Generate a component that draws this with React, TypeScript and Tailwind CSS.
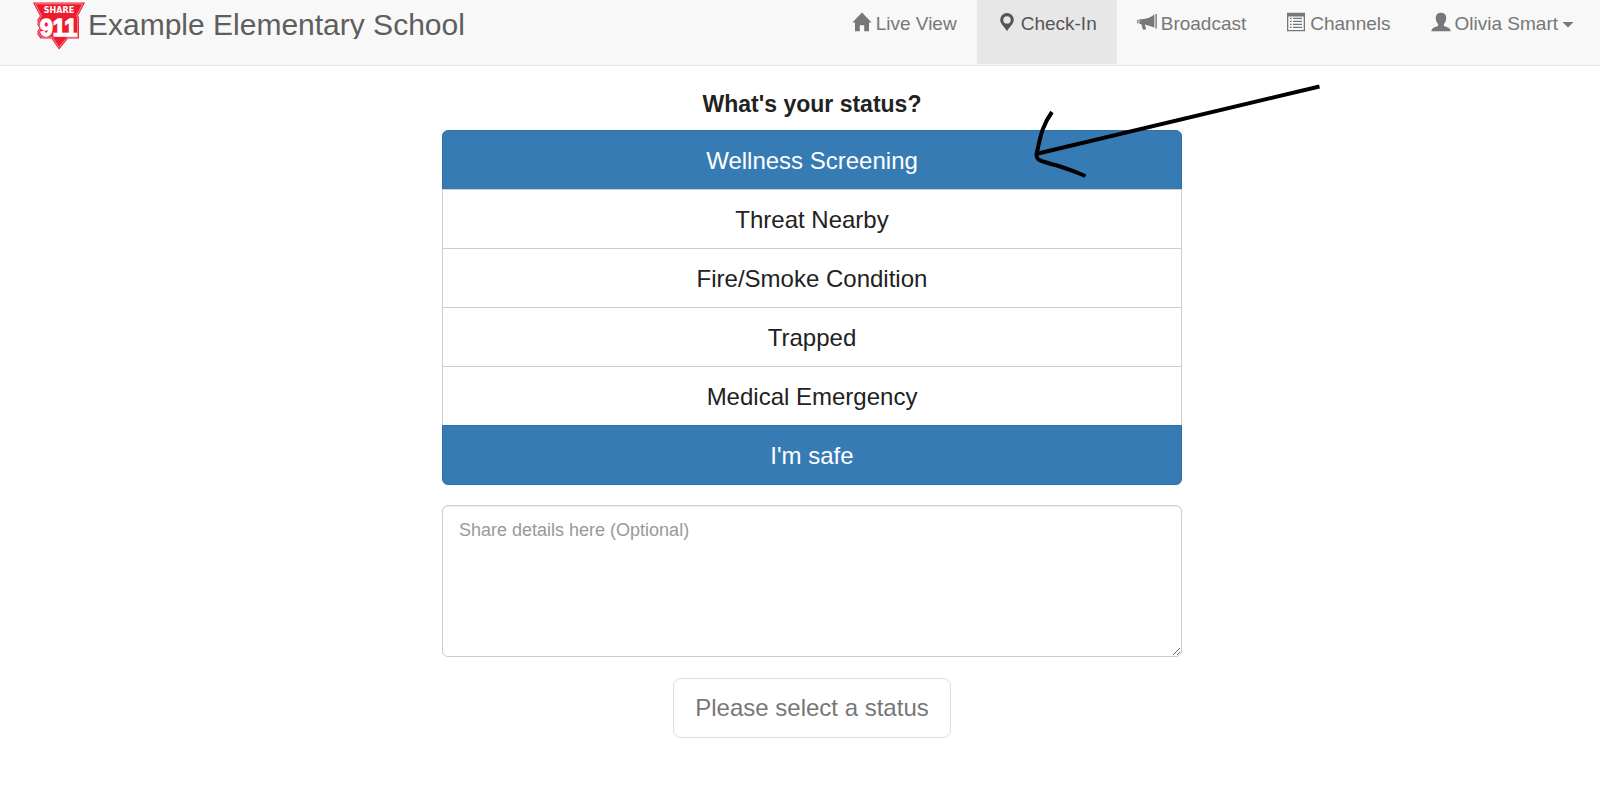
import { ReactNode, useState } from 'react';

interface NavItemProps {
  icon: ReactNode;
  label: string;
  active?: boolean;
  caret?: boolean;
}

const statuses = [
  { label: 'Wellness Screening', primary: true },
  { label: 'Threat Nearby', primary: false },
  { label: 'Fire/Smoke Condition', primary: false },
  { label: 'Trapped', primary: false },
  { label: 'Medical Emergency', primary: false },
  { label: "I'm safe", primary: true },
];

function Logo() {
  return (
    <svg viewBox="-1 0 53 48" className="h-12 w-[53px] shrink-0" aria-hidden="true">
      <path
        d="M0 .5H52L45 14L46 15V36.500H35L26 47.500L18.500 36.500H7.500L4.500 32.500V29L6.500 26L4.500 23V17.500L7 14Z"
        fill="#ed1c2e"
      />
      <path
        d="M2.300 1.800H49.700L43.600 14L44.700 15.500V35.200H34.300L26 45.300L19.200 35.200H8.200L5.900 32V29.500L8 26L5.900 22.500V18L8.500 14Z"
        fill="none"
        stroke="#fff"
        strokeOpacity="0.8"
        strokeWidth="0.6"
      />
      <text
        x="26"
        y="11"
        textAnchor="middle"
        fill="#fff"
        fontFamily="DejaVu Sans, sans-serif"
        fontWeight="700"
        fontSize="8"
      >
        SHARE
      </text>
      <text
        x="25.500"
        y="33.500"
        textAnchor="middle"
        fill="#fff"
        stroke="#fff"
        strokeWidth="1.400"
        fontFamily="Liberation Sans, Arial, sans-serif"
        fontWeight="700"
        fontSize="23"
      >
        911
      </text>
    </svg>
  );
}

function HomeIcon() {
  return (
    <svg viewBox="0 0 20 20" className="size-5" fill="currentColor" aria-hidden="true">
      <path d="M10 .6l9.600 9.800H17v8.900h-4.800v-6.100H7.800v6.100H3v-8.900H.4z" />
    </svg>
  );
}

function PinIcon() {
  return (
    <svg viewBox="0 0 20 20" className="size-5" fill="currentColor" aria-hidden="true">
      <path
        fillRule="evenodd"
        d="M10 1a6.800 6.800 0 0 1 6.800 6.800c0 4.200-4.600 7.600-6.800 11.400-2.200-3.800-6.800-7.200-6.800-11.400A6.800 6.800 0 0 1 10 1zm0 3.200a3.700 3.700 0 1 0 0 7.400 3.700 3.700 0 0 0 0-7.400z"
      />
    </svg>
  );
}

function BullhornIcon() {
  return (
    <svg viewBox="0 0 20 20" className="size-5" fill="currentColor" aria-hidden="true">
      <path d="M18.400 2h1.400v14.600h-1.400zM17.400 2.400v13.200l-9.600-3 1.400 4.600-3.200.5-1.800-5.600H3V7.300h1.600c5-.4 8.800-2 12.800-4.900zM.2 7.800h1.200v3.400H.2zM1.900 7.200h.7v4.700h-.7z" />
    </svg>
  );
}

function ListIcon() {
  return (
    <svg viewBox="0 0 20 20" className="size-5" fill="currentColor" aria-hidden="true">
      <path fillRule="evenodd" d="M1 .8h18v18.500H1zM2.300 4.500v13.400h15.400V4.500z" />
      <path d="M4 5.800h1.700v1.200H4zM7 5.800h9v1.200H7zM4 8.700h1.700v1.200H4zM7 8.700h9v1.200H7zM4 11.700h1.700v1.200H4zM7 11.700h9v1.200H7zM4 14.700h1.700v1.200H4zM7 14.700h9v1.200H7z" />
    </svg>
  );
}

function UserIcon() {
  return (
    <svg viewBox="0 0 20 20" className="size-5" fill="currentColor" aria-hidden="true">
      <path d="M10 .8c3.400 0 5.200 2.200 5.200 5.200 0 2.500-.9 4.700-2.300 6v1.400c0 .5.200.7.700.9 3.200 1.100 5.200 2 5.700 3.400.2.600.3 1.100.3 1.600H.4c0-.5.1-1 .3-1.600.5-1.400 2.500-2.300 5.700-3.400.5-.2.700-.4.700-.9V12c-1.400-1.300-2.300-3.500-2.300-6C4.800 3 6.600.8 10 .8z" />
    </svg>
  );
}

function NavItem({ icon, label, active = false, caret = false }: NavItemProps) {
  return (
    <li>
      <a
        href="#"
        aria-current={active ? 'page' : undefined}
        className={`flex h-16 items-start gap-1 px-5 pt-3 ${
          active ? 'bg-[#e7e7e7] text-[#555]' : 'text-[#777]'
        }`}
      >
        {icon}
        <span className="text-[19px] leading-6">{label}</span>
        {caret && (
          <svg viewBox="0 0 12 6" className="mt-2.5 h-1.5 w-3" fill="currentColor" aria-hidden="true">
            <path d="M.5 0h11L6 5.500z" />
          </svg>
        )}
      </a>
    </li>
  );
}

function Arrow() {
  return (
    <svg
      viewBox="0 0 300 110"
      className="pointer-events-none absolute -top-[52px] left-[582px] h-[110px] w-[300px]"
      fill="none"
      stroke="#000"
      strokeWidth="4"
      aria-hidden="true"
    >
      <path d="M295.500 8.500L14 75.500" />
      <path d="M28 34C17 49 16 62 12.500 76C12 83 18 83 27 86C40 89 49 93 61.500 98" />
    </svg>
  );
}

export default function App() {
  const [details, setDetails] = useState('');

  return (
    <div className="min-h-screen bg-white font-['Liberation_Sans',Arial,sans-serif] text-[#222]">
      <header className="flex justify-between border-b border-[#e7e7e7] bg-[#f8f8f8] pr-1.5 pl-8">
        <a href="#" className="flex h-[65px] items-start gap-[3px] pt-0.5 text-[#5e5e5e]">
          <Logo />
          <span className="mt-[5px] h-8 overflow-hidden text-[30px] leading-9">
            Example Elementary School
          </span>
        </a>
        <nav>
          <ul className="flex">
            <NavItem icon={<HomeIcon />} label="Live View" />
            <NavItem icon={<PinIcon />} label="Check-In" active />
            <NavItem icon={<BullhornIcon />} label="Broadcast" />
            <NavItem icon={<ListIcon />} label="Channels" />
            <NavItem icon={<UserIcon />} label="Olivia Smart" caret />
          </ul>
        </nav>
      </header>

      <main className="flex justify-center pt-[22px] pl-6">
        <div className="w-[740px]">
          <h1 className="pb-2.5 text-center text-[23px] leading-8 font-bold">What's your status?</h1>

          <div className="relative">
            <div className="flex flex-col">
              {statuses.map((status) => (
                <button
                  key={status.label}
                  type="button"
                  className={`-mb-px h-[60px] border pt-0.5 text-2xl first:rounded-t-md last:mb-0 last:rounded-b-md ${
                    status.primary
                      ? 'border-[#2a70ad] bg-[#377bb5] text-white'
                      : 'border-[#ccc] bg-white'
                  }`}
                >
                  {status.label}
                </button>
              ))}
            </div>
            <Arrow />
          </div>

          <textarea
            aria-label="Share details here (Optional)"
            placeholder="Share details here (Optional)"
            value={details}
            onChange={(e) => setDetails(e.target.value)}
            className="mt-5 block h-[152px] w-full rounded-md border border-[#ccc] px-4 py-2.5 text-lg leading-7 shadow-[inset_0_1px_1px_rgba(0,0,0,0.075)] placeholder:text-[#999]"
          />

          <div className="mt-[21px] flex justify-center">
            <button
              type="button"
              disabled
              className="h-[60px] rounded-lg border border-[#ddd] bg-white px-[21px] text-2xl text-[#777]"
            >
              Please select a status
            </button>
          </div>
        </div>
      </main>
    </div>
  );
}
